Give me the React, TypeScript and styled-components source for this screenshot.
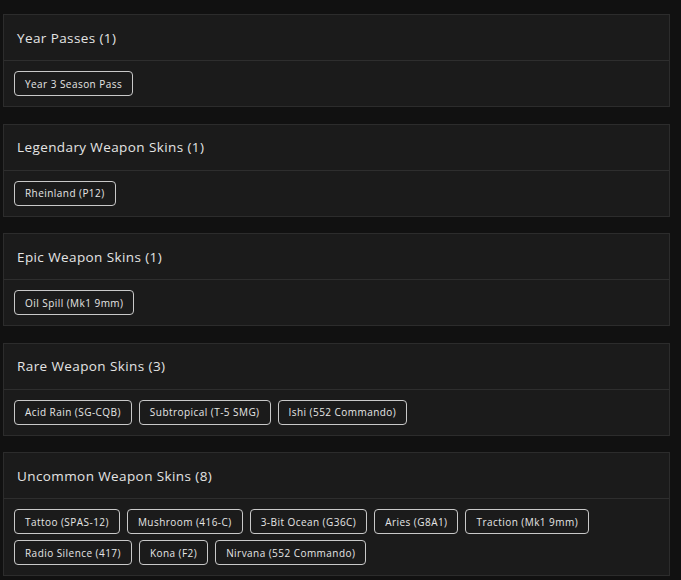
import React from "react";
import styled, { createGlobalStyle } from "styled-components";

const GlobalStyle = createGlobalStyle`
  html, body {
    margin: 0;
    padding: 0;
    background: #111111;
  }
  body {
    font-family: "Open Sans", "Liberation Sans", sans-serif;
    color: #e2e2e2;
  }
`;

const Page = styled.div`
  display: flex;
  flex-direction: column;
  gap: 16.5px;
  padding: 14px 11px 4px 3px;
`;

const Card = styled.section`
  background: #1b1b1b;
  border: 1px solid #2c2c2c;
`;

const CardHeader = styled.header`
  height: 45px;
  display: flex;
  align-items: center;
  padding: 0 13px;
  border-bottom: 1px solid #2e2e2e;
  font-size: 13.5px;
  letter-spacing: 0.4px;
  color: #e4e4e4;
`;

const ChipList = styled.div`
  display: flex;
  flex-wrap: wrap;
  gap: 6px 7px;
  padding: 10px 10px;
`;

const Chip = styled.span`
  display: inline-flex;
  align-items: center;
  height: 25px;
  box-sizing: border-box;
  padding: 0 10px;
  border: 1px solid #c9c9c9;
  border-radius: 4px;
  font-size: 10px;
  letter-spacing: 0.45px;
  color: #e6e6e6;
  white-space: nowrap;
`;

type Group = { title: string; items: string[] };

const groups: Group[] = [
  { title: "Year Passes", items: ["Year 3 Season Pass"] },
  { title: "Legendary Weapon Skins", items: ["Rheinland (P12)"] },
  { title: "Epic Weapon Skins", items: ["Oil Spill (Mk1 9mm)"] },
  {
    title: "Rare Weapon Skins",
    items: ["Acid Rain (SG-CQB)", "Subtropical (T-5 SMG)", "Ishi (552 Commando)"],
  },
  {
    title: "Uncommon Weapon Skins",
    items: [
      "Tattoo (SPAS-12)",
      "Mushroom (416-C)",
      "3-Bit Ocean (G36C)",
      "Aries (G8A1)",
      "Traction (Mk1 9mm)",
      "Radio Silence (417)",
      "Kona (F2)",
      "Nirvana (552 Commando)",
    ],
  },
];

export default function App() {
  return (
    <>
      <GlobalStyle />
      <Page>
        {groups.map((g) => (
          <Card key={g.title}>
            <CardHeader>
              {g.title} ({g.items.length})
            </CardHeader>
            <ChipList>
              {g.items.map((item) => (
                <Chip key={item}>{item}</Chip>
              ))}
            </ChipList>
          </Card>
        ))}
      </Page>
    </>
  );
}
